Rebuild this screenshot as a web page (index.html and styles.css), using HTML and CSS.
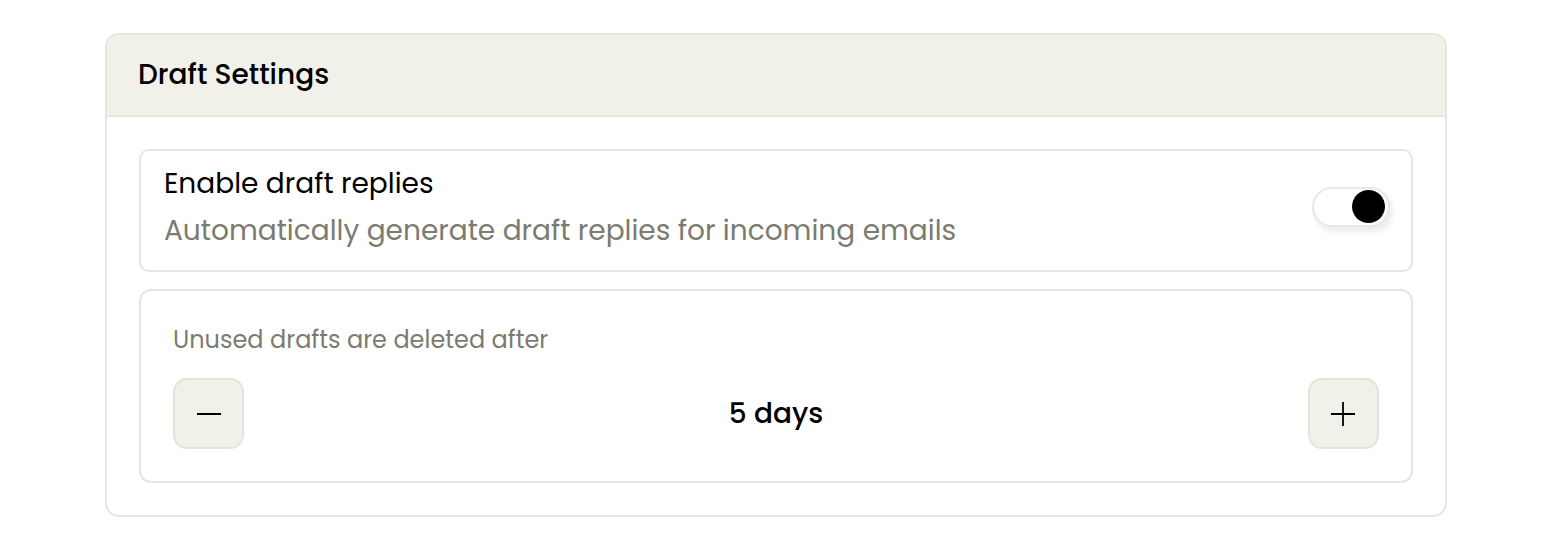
FILE: index.html
```html
<!DOCTYPE html>
<html>
<head>
    <title>Draft Settings</title>
    <meta charset="utf-8">
    <link rel="stylesheet" href="styles.css">
</head>
<body>
    <div class="settings-card">
        <div class="card-header">
            <h2>Draft Settings</h2>
        </div>
        <div class="card-body">
            <div class="option-row">
                <div class="option-text">
                    <div class="option-title">Enable draft replies</div>
                    <div class="option-desc">Automatically generate draft replies for incoming emails</div>
                </div>
                <button class="toggle on" aria-label="Enable draft replies"><span class="knob"></span></button>
            </div>
            <div class="option-box">
                <div class="box-label">Unused drafts are deleted after</div>
                <div class="stepper">
                    <button class="step-btn" aria-label="Decrease">
                        <svg width="24" height="24" viewBox="0 0 24 24"><path d="M0 12h24" stroke="#000" stroke-width="1.8"/></svg>
                    </button>
                    <div class="step-value">5 days</div>
                    <button class="step-btn" aria-label="Increase">
                        <svg width="24" height="24" viewBox="0 0 24 24"><path d="M0 12h24M12 0v24" stroke="#000" stroke-width="1.8"/></svg>
                    </button>
                </div>
            </div>
        </div>
    </div>
</body>
</html>
```

FILE: styles.css
```css
body {
    margin: 0;
    padding: 33px 97px 17px 105px;
    font-family: "Poppins", "Open Sans", "Noto Sans", sans-serif;
    color: #000;
    background: #fff;
}
.settings-card {
    border: 2px solid #e6e6e0;
    border-radius: 14px;
    overflow: hidden;
}
.card-header {
    background-color: #f1f1e9;
    border-bottom: 2px solid #e6e6dc;
    height: 80px;
    display: flex;
    align-items: center;
    padding: 0 31px;
}
.card-header h2 {
    margin: 0;
    font-size: 28px;
    font-weight: 500;
}
.card-body {
    padding: 32px;
    display: flex;
    flex-direction: column;
    gap: 17px;
}
.option-row {
    border: 2px solid #e6e6e0;
    border-radius: 10px;
    padding: 13px 21px 16px 23px;
    display: flex;
    align-items: center;
    justify-content: space-between;
}
.option-title {
    font-size: 28px;
    line-height: 40px;
}
.option-desc {
    font-size: 28px;
    line-height: 46px;
    margin-top: 4px;
    color: #7b7b70;
}
.toggle {
    width: 78px;
    height: 40px;
    border: 2px solid #e8e8e2;
    border-radius: 20px;
    background: #fff;
    padding: 0 3px;
    display: flex;
    align-items: center;
    justify-content: flex-end;
    box-shadow: 3px 5px 6px rgba(0, 0, 0, 0.08);
    margin-top: -5px;
}
.knob {
    width: 33px;
    height: 33px;
    border-radius: 50%;
    background: #000;
}
.option-box {
    border: 2px solid #e6e6e0;
    border-radius: 12px;
    padding: 34px 32px 32px 32px;
}
.box-label {
    font-size: 24px;
    color: #7b7b70;
    line-height: 30px;
    margin-bottom: 23px;
}
.stepper {
    display: flex;
    align-items: center;
    justify-content: space-between;
}
.step-btn {
    width: 71px;
    height: 71px;
    border: 2px solid #e4e4dc;
    border-radius: 14px;
    background-color: #f1f1e9;
    display: flex;
    align-items: center;
    justify-content: center;
    padding: 0;
}
.step-value {
    font-size: 28px;
    font-weight: 500;
}
```
